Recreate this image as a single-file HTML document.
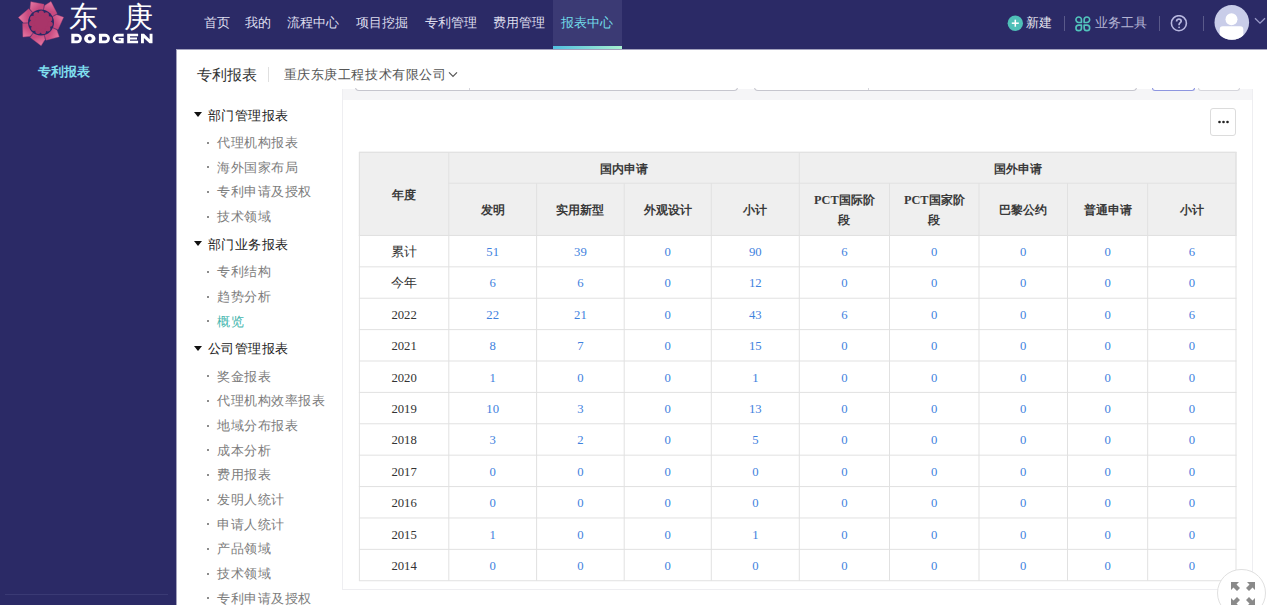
<!DOCTYPE html><html><head><meta charset="utf-8"><style>
*{margin:0;padding:0;box-sizing:border-box}
html,body{width:1267px;height:605px;overflow:hidden;background:#fff}
body{position:relative;font-family:"Liberation Serif",serif;color:#333}
.a{position:absolute;white-space:nowrap}
#hdr{position:absolute;left:0;top:0;width:1267px;height:49px;background:#2b2a66}
#side{position:absolute;left:0;top:49px;width:176px;height:556px;background:#2b2a66}
.nav{position:absolute;top:13.2px;height:20px;line-height:20px;font-size:13px;color:#e6e6f0}
.mh{font-size:13px;letter-spacing:0.55px;color:#222;height:20px;line-height:20px}
.mi{font-size:13px;letter-spacing:0.55px;color:#7c7c7c;height:20px;line-height:20px}
.dot{position:absolute;width:2px;height:2px;background:#666;border-radius:1px}
.tri{position:absolute;width:0;height:0;border-left:4.5px solid transparent;border-right:4.5px solid transparent;border-top:5px solid #111}
.hl{position:absolute;height:1px;background:#e2e2e2}
.vl{position:absolute;width:1px;background:#e2e2e2}
.th{position:absolute;font-size:12.3px;font-weight:bold;color:#3a3a3a;text-align:center;line-height:20px}
.td{position:absolute;font-size:12.7px;color:#3f82de;text-align:center;line-height:20px}
.ty{color:#333}
</style></head><body>

<div id="hdr"></div><div id="side"></div>
<svg class="a" style="left:0;top:0" width="70" height="49" viewBox="0 0 70 49"><defs><linearGradient id="pg" x1="0" y1="0" x2="1" y2="1"><stop offset="0" stop-color="#e6709c"/><stop offset="1" stop-color="#cc4d82"/></linearGradient></defs><linearGradient id="pg0" gradientUnits="userSpaceOnUse" x1="30.70" y1="1.38" x2="37.61" y2="8.92"><stop offset="0" stop-color="#e77ba5"/><stop offset="1" stop-color="#c84a7f"/></linearGradient><polygon points="33.45,13.17 29.99,8.90 30.83,1.65 44.04,4.35 42.98,10.66" fill="url(#pg0)" stroke="#b8457a" stroke-width="0.4"/><linearGradient id="pg1" gradientUnits="userSpaceOnUse" x1="51.09" y1="1.28" x2="49.51" y2="11.38"><stop offset="0" stop-color="#e77ba5"/><stop offset="1" stop-color="#c84a7f"/></linearGradient><polygon points="43.58,10.78 44.77,5.41 50.96,1.55 57.08,13.56 51.49,16.67" fill="url(#pg1)" stroke="#b8457a" stroke-width="0.4"/><linearGradient id="pg2" gradientUnits="userSpaceOnUse" x1="63.88" y1="17.16" x2="55.00" y2="22.22"><stop offset="0" stop-color="#e77ba5"/><stop offset="1" stop-color="#c84a7f"/></linearGradient><polygon points="51.77,17.21 56.71,14.79 63.59,17.22 58.02,29.50 52.10,27.06" fill="url(#pg2)" stroke="#b8457a" stroke-width="0.4"/><linearGradient id="pg3" gradientUnits="userSpaceOnUse" x1="59.45" y1="37.06" x2="49.95" y2="33.27"><stop offset="0" stop-color="#e77ba5"/><stop offset="1" stop-color="#c84a7f"/></linearGradient><polygon points="51.85,27.63 56.82,29.97 59.21,36.87 46.14,40.17 44.35,34.02" fill="url(#pg3)" stroke="#b8457a" stroke-width="0.4"/><linearGradient id="pg4" gradientUnits="userSpaceOnUse" x1="41.12" y1="46.00" x2="38.16" y2="36.21"><stop offset="0" stop-color="#e77ba5"/><stop offset="1" stop-color="#c84a7f"/></linearGradient><polygon points="43.76,34.18 45.02,39.53 41.12,45.70 30.39,37.53 34.08,32.30" fill="url(#pg4)" stroke="#b8457a" stroke-width="0.4"/><linearGradient id="pg5" gradientUnits="userSpaceOnUse" x1="22.70" y1="37.24" x2="28.51" y2="28.82"><stop offset="0" stop-color="#e77ba5"/><stop offset="1" stop-color="#c84a7f"/></linearGradient><polygon points="33.59,31.94 30.19,36.26 22.93,37.06 22.63,23.58 29.02,23.20" fill="url(#pg5)" stroke="#b8457a" stroke-width="0.4"/><linearGradient id="pg6" gradientUnits="userSpaceOnUse" x1="18.06" y1="17.39" x2="28.27" y2="16.68"><stop offset="0" stop-color="#e77ba5"/><stop offset="1" stop-color="#c84a7f"/></linearGradient><polygon points="29.00,22.59 23.50,22.63 18.36,17.45 28.71,8.81 32.98,13.57" fill="url(#pg6)" stroke="#b8457a" stroke-width="0.4"/><circle cx="41" cy="22.5" r="13" fill="#2b2a66"/><circle cx="41" cy="22.5" r="10" fill="#a93569"/><circle cx="50.06" cy="24.10" r="2.7" fill="#a93569"/><circle cx="47.76" cy="28.74" r="2.7" fill="#a93569"/><circle cx="43.31" cy="31.41" r="2.7" fill="#a93569"/><circle cx="38.13" cy="31.24" r="2.7" fill="#a93569"/><circle cx="33.86" cy="28.30" r="2.7" fill="#a93569"/><circle cx="31.86" cy="23.52" r="2.7" fill="#a93569"/><circle cx="32.76" cy="18.41" r="2.7" fill="#a93569"/><circle cx="36.27" cy="14.61" r="2.7" fill="#a93569"/><circle cx="41.29" cy="13.30" r="2.7" fill="#a93569"/><circle cx="46.22" cy="14.92" r="2.7" fill="#a93569"/><circle cx="49.49" cy="18.95" r="2.7" fill="#a93569"/></svg>
<div class="a" style="left:69px;top:-1px;font-family:'Liberation Sans',sans-serif;font-size:29px;color:#fff;line-height:36px;letter-spacing:0">东</div>
<div class="a" style="left:123.5px;top:-1px;font-family:'Liberation Sans',sans-serif;font-size:29px;color:#fff;line-height:36px">庚</div>
<svg class="a" style="left:0;top:0" width="160" height="49" viewBox="0 0 160 49"><path fill="#fff" fill-rule="evenodd" d="M71.30 33.80 H77.15 A4.75 4.75 0 0 1 77.15 43.30 H71.30 Z M74.50 36.65 H77.15 A1.90 1.90 0 0 1 77.15 40.45 H74.50 Z M89.8 33.8 A5.7 4.75 0 1 1 89.79 33.8 Z M89.8 36.55 A1.95 2.0 0 1 0 89.81 36.55 Z M98.90 33.80 H105.15 A4.75 4.75 0 0 1 105.15 43.30 H98.90 Z M102.10 36.65 H105.15 A1.90 1.90 0 0 1 105.15 40.45 H102.10 Z M123.7 33.8 H117.5 A4.75 4.75 0 0 0 117.5 43.3 H123.7 V38.0 H118.6 V39.5 H120.9 V40.6 H117.5 A2.05 2.05 0 0 1 117.5 36.5 H123.7 Z M127.2 33.8 H138.1 V36.3 H130.0 V37.55 H137.0 V39.55 H130.0 V40.8 H138.1 V43.3 H127.2 Z M141.0 43.3 V33.8 H144.0 L149.6 39.2 V33.8 H152.5 V43.3 H149.5 L143.9 37.9 V43.3 Z"/></svg>
<div class="a" style="left:553px;top:0;width:69px;height:49px;background:#3b3a74"></div>
<div class="a" style="left:553px;top:46px;width:69px;height:3px;background:linear-gradient(90deg,#52c0e0,#a8f0d0)"></div>
<div class="nav" style="left:204px;color:#dedeee">首页</div>
<div class="nav" style="left:245.4px;color:#dedeee">我的</div>
<div class="nav" style="left:287px;color:#dedeee">流程中心</div>
<div class="nav" style="left:355.5px;color:#dedeee">项目挖掘</div>
<div class="nav" style="left:425px;color:#dedeee">专利管理</div>
<div class="nav" style="left:493px;color:#dedeee">费用管理</div>
<div class="nav" style="left:561.4px;color:#72dbe9">报表中心</div>
<svg class="a" style="left:1007px;top:15px" width="17" height="17" viewBox="0 0 17 17"><circle cx="8.3" cy="8.2" r="7.7" fill="#4fc0b8"/><rect x="4.8" y="7.45" width="7" height="1.5" fill="#fff"/><rect x="7.55" y="4.7" width="1.5" height="7" fill="#fff"/></svg>
<div class="nav" style="left:1026px;color:#e6e6f0">新建</div>
<div class="a" style="left:1064px;top:16px;width:1px;height:15px;background:#5a5a8a"></div>
<svg class="a" style="left:1075px;top:15.8px" width="17" height="17" viewBox="0 0 17 17"><path d="M6.45 3.70 L6.45 6.45 L3.70 6.45 A2.75 2.75 0 1 1 6.45 3.70 Z M9.15 3.70 L9.15 6.45 L11.90 6.45 A2.75 2.75 0 1 0 9.15 3.70 Z M6.45 11.90 L6.45 9.15 L3.70 9.15 A2.75 2.75 0 1 0 6.45 11.90 Z M9.15 11.90 L9.15 9.15 L11.90 9.15 A2.75 2.75 0 1 1 9.15 11.90 Z" fill="none" stroke="#52c4bc" stroke-width="1.65" stroke-linejoin="round"/></svg>
<div class="nav" style="left:1095px;color:#b4b4d4">业务工具</div>
<div class="a" style="left:1159px;top:16px;width:1px;height:15px;background:#5a5a8a"></div>
<svg class="a" style="left:1170px;top:15px" width="18" height="17" viewBox="0 0 18 17"><circle cx="8.9" cy="8.2" r="7.5" fill="none" stroke="#b8b8e0" stroke-width="1.6"/><path d="M6.6 6.4 C6.6 4.9 7.6 4.1 8.9 4.1 C10.3 4.1 11.2 5 11.2 6.2 C11.2 7.6 9.1 7.8 9.1 9.6 L9.1 10.2" fill="none" stroke="#b8b8e0" stroke-width="1.7"/><circle cx="9.1" cy="12.3" r="0.9" fill="#b8b8e0"/></svg>
<div class="a" style="left:1203px;top:16px;width:1px;height:15px;background:#5a5a8a"></div>
<svg class="a" style="left:1214px;top:5px" width="36" height="36" viewBox="0 0 36 36"><defs><clipPath id="av"><circle cx="17.8" cy="17.4" r="17.3"/></clipPath></defs><circle cx="17.8" cy="17.4" r="17.3" fill="#c9cde9"/><g clip-path="url(#av)"><circle cx="17.5" cy="14.2" r="6" fill="#fff"/><rect x="5.7" y="21.3" width="23.6" height="20" rx="3" fill="#fff"/></g></svg>
<svg class="a" style="left:1254px;top:17px" width="13" height="8" viewBox="0 0 13 8"><path d="M1 1.2 L6 6.2 L11 1.2" fill="none" stroke="#9a9ac8" stroke-width="1.3"/></svg>
<div class="a" style="left:5px;top:594px;width:163px;height:1px;background:#3a3a74"></div>
<div class="a" style="left:37.5px;top:62px;font-size:13.2px;line-height:20px;color:#7fdfee;font-weight:bold">专利报表</div>
<div class="a" style="left:342px;top:89px;width:911px;height:11px;background:#f5f5f7;border-left:1px solid #eeeef1;border-right:1px solid #eeeef1"></div>
<div class="a" style="left:355px;top:80px;width:383px;height:11px;border:1px solid #c6c6ce;border-top:none;border-radius:0 0 4px 4px;background:#fff"></div>
<div class="a" style="left:469px;top:80px;width:1px;height:10px;background:#d6d6dc"></div>
<div class="a" style="left:754px;top:80px;width:383px;height:11px;border:1px solid #c6c6ce;border-top:none;border-radius:0 0 4px 4px;background:#fff"></div>
<div class="a" style="left:868px;top:80px;width:1px;height:10px;background:#d6d6dc"></div>
<div class="a" style="left:1152px;top:80px;width:43px;height:11px;border:1px solid #8e96e0;border-top:none;border-radius:0 0 3px 3px;background:#fff"></div>
<div class="a" style="left:1198px;top:80px;width:42px;height:11px;border:1px solid #d6d6dc;border-top:none;border-radius:0 0 3px 3px;background:#fff"></div>
<div class="a" style="left:342px;top:100px;width:911px;height:490px;border:1px solid #eeeef1;border-top:none;background:#fff"></div>
<div class="a" style="left:1210px;top:108px;width:26px;height:28px;border:1px solid #dcdcdc;border-radius:3px;background:#fff"></div>
<svg class="a" style="left:1216.5px;top:120px" width="14" height="4" viewBox="0 0 14 4"><circle cx="2.5" cy="2" r="1.3" fill="#222"/><circle cx="6.5" cy="2" r="1.3" fill="#222"/><circle cx="10.5" cy="2" r="1.3" fill="#222"/></svg>
<div class="a" style="left:176px;top:49px;width:1091px;height:39px;background:#fff;z-index:0"></div>
<div class="a" style="left:196.5px;top:65px;font-size:15px;line-height:20px;color:#333">专利报表</div>
<div class="a" style="left:268px;top:67px;width:1px;height:15px;background:#e0e0e0"></div>
<div class="a" style="left:283.5px;top:65px;font-size:13px;letter-spacing:0.6px;line-height:20px;color:#555">重庆东庚工程技术有限公司</div>
<svg class="a" style="left:448px;top:71px" width="10" height="7" viewBox="0 0 10 7"><path d="M1 1.3 L5 5.3 L9 1.3" fill="none" stroke="#555" stroke-width="1.2"/></svg>
<div class="a" style="left:176px;top:49px;width:1091px;height:1px;background:#a3a2bd"></div>
<div class="a" style="left:176px;top:49px;width:1px;height:556px;background:#a3a2bd"></div>
<div class="tri" style="left:193.5px;top:112.0px"></div>
<div class="a mh" style="left:207.5px;top:105.5px">部门管理报表</div>
<div class="dot" style="left:207px;top:141.6px"></div>
<div class="a mi" style="left:217px;top:133.0px;color:#7c7c7c">代理机构报表</div>
<div class="dot" style="left:207px;top:166.3px"></div>
<div class="a mi" style="left:217px;top:157.7px;color:#7c7c7c">海外国家布局</div>
<div class="dot" style="left:207px;top:191.0px"></div>
<div class="a mi" style="left:217px;top:182.4px;color:#7c7c7c">专利申请及授权</div>
<div class="dot" style="left:207px;top:215.6px"></div>
<div class="a mi" style="left:217px;top:207.0px;color:#7c7c7c">技术领域</div>
<div class="tri" style="left:193.5px;top:241.2px"></div>
<div class="a mh" style="left:207.5px;top:234.6px">部门业务报表</div>
<div class="dot" style="left:207px;top:270.8px"></div>
<div class="a mi" style="left:217px;top:262.2px;color:#7c7c7c">专利结构</div>
<div class="dot" style="left:207px;top:295.5px"></div>
<div class="a mi" style="left:217px;top:286.9px;color:#7c7c7c">趋势分析</div>
<div class="dot" style="left:207px;top:320.2px"></div>
<div class="a mi" style="left:217px;top:311.6px;color:#45b6ae">概览</div>
<div class="tri" style="left:193.5px;top:345.7px"></div>
<div class="a mh" style="left:207.5px;top:339.1px">公司管理报表</div>
<div class="dot" style="left:207px;top:375.3px"></div>
<div class="a mi" style="left:217px;top:366.7px;color:#7c7c7c">奖金报表</div>
<div class="dot" style="left:207px;top:400.0px"></div>
<div class="a mi" style="left:217px;top:391.4px;color:#7c7c7c">代理机构效率报表</div>
<div class="dot" style="left:207px;top:424.7px"></div>
<div class="a mi" style="left:217px;top:416.1px;color:#7c7c7c">地域分布报表</div>
<div class="dot" style="left:207px;top:449.3px"></div>
<div class="a mi" style="left:217px;top:440.7px;color:#7c7c7c">成本分析</div>
<div class="dot" style="left:207px;top:474.0px"></div>
<div class="a mi" style="left:217px;top:465.4px;color:#7c7c7c">费用报表</div>
<div class="dot" style="left:207px;top:498.7px"></div>
<div class="a mi" style="left:217px;top:490.1px;color:#7c7c7c">发明人统计</div>
<div class="dot" style="left:207px;top:523.3px"></div>
<div class="a mi" style="left:217px;top:514.7px;color:#7c7c7c">申请人统计</div>
<div class="dot" style="left:207px;top:548.0px"></div>
<div class="a mi" style="left:217px;top:539.4px;color:#7c7c7c">产品领域</div>
<div class="dot" style="left:207px;top:572.7px"></div>
<div class="a mi" style="left:217px;top:564.1px;color:#7c7c7c">技术领域</div>
<div class="dot" style="left:207px;top:597.4px"></div>
<div class="a mi" style="left:217px;top:588.8px;color:#7c7c7c">专利申请及授权</div>
<svg class="a" style="left:350px;top:145px" width="900" height="445" viewBox="0 0 900 445"><g stroke="#e1e1e1" stroke-width="1"><rect x="9.40" y="7.30" width="876.60" height="83.15" fill="#efefef"/><line x1="8.90" y1="7.30" x2="886.50" y2="7.30"/><line x1="98.30" y1="38.20" x2="886.50" y2="38.20"/><line x1="8.90" y1="90.45" x2="886.50" y2="90.45"/><line x1="8.90" y1="121.84" x2="886.50" y2="121.84"/><line x1="8.90" y1="153.23" x2="886.50" y2="153.23"/><line x1="8.90" y1="184.62" x2="886.50" y2="184.62"/><line x1="8.90" y1="216.01" x2="886.50" y2="216.01"/><line x1="8.90" y1="247.40" x2="886.50" y2="247.40"/><line x1="8.90" y1="278.79" x2="886.50" y2="278.79"/><line x1="8.90" y1="310.18" x2="886.50" y2="310.18"/><line x1="8.90" y1="341.57" x2="886.50" y2="341.57"/><line x1="8.90" y1="372.96" x2="886.50" y2="372.96"/><line x1="8.90" y1="404.35" x2="886.50" y2="404.35"/><line x1="8.90" y1="435.74" x2="886.50" y2="435.74"/><line x1="9.40" y1="7.30" x2="9.40" y2="435.74"/><line x1="98.80" y1="7.30" x2="98.80" y2="435.74"/><line x1="186.60" y1="38.20" x2="186.60" y2="435.74"/><line x1="274.20" y1="38.20" x2="274.20" y2="435.74"/><line x1="361.30" y1="38.20" x2="361.30" y2="435.74"/><line x1="449.30" y1="7.30" x2="449.30" y2="435.74"/><line x1="539.50" y1="38.20" x2="539.50" y2="435.74"/><line x1="629.00" y1="38.20" x2="629.00" y2="435.74"/><line x1="717.50" y1="38.20" x2="717.50" y2="435.74"/><line x1="797.70" y1="38.20" x2="797.70" y2="435.74"/><line x1="886.00" y1="7.30" x2="886.00" y2="435.74"/></g></svg>
<div class="th" style="left:359.40px;width:89.40px;top:184.78px;">年度</div>
<div class="th" style="left:448.80px;width:350.50px;top:158.65px;">国内申请</div>
<div class="th" style="left:799.30px;width:436.70px;top:158.65px;">国外申请</div>
<div class="th" style="left:448.80px;width:87.80px;top:200.22px;">发明</div>
<div class="th" style="left:536.60px;width:87.60px;top:200.22px;">实用新型</div>
<div class="th" style="left:624.20px;width:87.10px;top:200.22px;">外观设计</div>
<div class="th" style="left:711.30px;width:88.00px;top:200.22px;">小计</div>
<div class="th" style="left:799.30px;width:90.20px;top:190.22px;line-height:20px"><b>PCT</b>国际阶<br>段</div>
<div class="th" style="left:889.50px;width:89.50px;top:190.22px;line-height:20px"><b>PCT</b>国家阶<br>段</div>
<div class="th" style="left:979.00px;width:88.50px;top:200.22px;">巴黎公约</div>
<div class="th" style="left:1067.50px;width:80.20px;top:200.22px;">普通申请</div>
<div class="th" style="left:1147.70px;width:88.30px;top:200.22px;">小计</div>
<div class="td ty" style="left:359.40px;width:89.40px;top:242.04px;">累计</div>
<div class="td" style="left:448.80px;width:87.80px;top:242.04px;">51</div>
<div class="td" style="left:536.60px;width:87.60px;top:242.04px;">39</div>
<div class="td" style="left:624.20px;width:87.10px;top:242.04px;">0</div>
<div class="td" style="left:711.30px;width:88.00px;top:242.04px;">90</div>
<div class="td" style="left:799.30px;width:90.20px;top:242.04px;">6</div>
<div class="td" style="left:889.50px;width:89.50px;top:242.04px;">0</div>
<div class="td" style="left:979.00px;width:88.50px;top:242.04px;">0</div>
<div class="td" style="left:1067.50px;width:80.20px;top:242.04px;">0</div>
<div class="td" style="left:1147.70px;width:88.30px;top:242.04px;">6</div>
<div class="td ty" style="left:359.40px;width:89.40px;top:273.43px;">今年</div>
<div class="td" style="left:448.80px;width:87.80px;top:273.43px;">6</div>
<div class="td" style="left:536.60px;width:87.60px;top:273.43px;">6</div>
<div class="td" style="left:624.20px;width:87.10px;top:273.43px;">0</div>
<div class="td" style="left:711.30px;width:88.00px;top:273.43px;">12</div>
<div class="td" style="left:799.30px;width:90.20px;top:273.43px;">0</div>
<div class="td" style="left:889.50px;width:89.50px;top:273.43px;">0</div>
<div class="td" style="left:979.00px;width:88.50px;top:273.43px;">0</div>
<div class="td" style="left:1067.50px;width:80.20px;top:273.43px;">0</div>
<div class="td" style="left:1147.70px;width:88.30px;top:273.43px;">0</div>
<div class="td ty" style="left:359.40px;width:89.40px;top:304.82px;">2022</div>
<div class="td" style="left:448.80px;width:87.80px;top:304.82px;">22</div>
<div class="td" style="left:536.60px;width:87.60px;top:304.82px;">21</div>
<div class="td" style="left:624.20px;width:87.10px;top:304.82px;">0</div>
<div class="td" style="left:711.30px;width:88.00px;top:304.82px;">43</div>
<div class="td" style="left:799.30px;width:90.20px;top:304.82px;">6</div>
<div class="td" style="left:889.50px;width:89.50px;top:304.82px;">0</div>
<div class="td" style="left:979.00px;width:88.50px;top:304.82px;">0</div>
<div class="td" style="left:1067.50px;width:80.20px;top:304.82px;">0</div>
<div class="td" style="left:1147.70px;width:88.30px;top:304.82px;">6</div>
<div class="td ty" style="left:359.40px;width:89.40px;top:336.21px;">2021</div>
<div class="td" style="left:448.80px;width:87.80px;top:336.21px;">8</div>
<div class="td" style="left:536.60px;width:87.60px;top:336.21px;">7</div>
<div class="td" style="left:624.20px;width:87.10px;top:336.21px;">0</div>
<div class="td" style="left:711.30px;width:88.00px;top:336.21px;">15</div>
<div class="td" style="left:799.30px;width:90.20px;top:336.21px;">0</div>
<div class="td" style="left:889.50px;width:89.50px;top:336.21px;">0</div>
<div class="td" style="left:979.00px;width:88.50px;top:336.21px;">0</div>
<div class="td" style="left:1067.50px;width:80.20px;top:336.21px;">0</div>
<div class="td" style="left:1147.70px;width:88.30px;top:336.21px;">0</div>
<div class="td ty" style="left:359.40px;width:89.40px;top:367.60px;">2020</div>
<div class="td" style="left:448.80px;width:87.80px;top:367.60px;">1</div>
<div class="td" style="left:536.60px;width:87.60px;top:367.60px;">0</div>
<div class="td" style="left:624.20px;width:87.10px;top:367.60px;">0</div>
<div class="td" style="left:711.30px;width:88.00px;top:367.60px;">1</div>
<div class="td" style="left:799.30px;width:90.20px;top:367.60px;">0</div>
<div class="td" style="left:889.50px;width:89.50px;top:367.60px;">0</div>
<div class="td" style="left:979.00px;width:88.50px;top:367.60px;">0</div>
<div class="td" style="left:1067.50px;width:80.20px;top:367.60px;">0</div>
<div class="td" style="left:1147.70px;width:88.30px;top:367.60px;">0</div>
<div class="td ty" style="left:359.40px;width:89.40px;top:398.99px;">2019</div>
<div class="td" style="left:448.80px;width:87.80px;top:398.99px;">10</div>
<div class="td" style="left:536.60px;width:87.60px;top:398.99px;">3</div>
<div class="td" style="left:624.20px;width:87.10px;top:398.99px;">0</div>
<div class="td" style="left:711.30px;width:88.00px;top:398.99px;">13</div>
<div class="td" style="left:799.30px;width:90.20px;top:398.99px;">0</div>
<div class="td" style="left:889.50px;width:89.50px;top:398.99px;">0</div>
<div class="td" style="left:979.00px;width:88.50px;top:398.99px;">0</div>
<div class="td" style="left:1067.50px;width:80.20px;top:398.99px;">0</div>
<div class="td" style="left:1147.70px;width:88.30px;top:398.99px;">0</div>
<div class="td ty" style="left:359.40px;width:89.40px;top:430.38px;">2018</div>
<div class="td" style="left:448.80px;width:87.80px;top:430.38px;">3</div>
<div class="td" style="left:536.60px;width:87.60px;top:430.38px;">2</div>
<div class="td" style="left:624.20px;width:87.10px;top:430.38px;">0</div>
<div class="td" style="left:711.30px;width:88.00px;top:430.38px;">5</div>
<div class="td" style="left:799.30px;width:90.20px;top:430.38px;">0</div>
<div class="td" style="left:889.50px;width:89.50px;top:430.38px;">0</div>
<div class="td" style="left:979.00px;width:88.50px;top:430.38px;">0</div>
<div class="td" style="left:1067.50px;width:80.20px;top:430.38px;">0</div>
<div class="td" style="left:1147.70px;width:88.30px;top:430.38px;">0</div>
<div class="td ty" style="left:359.40px;width:89.40px;top:461.77px;">2017</div>
<div class="td" style="left:448.80px;width:87.80px;top:461.77px;">0</div>
<div class="td" style="left:536.60px;width:87.60px;top:461.77px;">0</div>
<div class="td" style="left:624.20px;width:87.10px;top:461.77px;">0</div>
<div class="td" style="left:711.30px;width:88.00px;top:461.77px;">0</div>
<div class="td" style="left:799.30px;width:90.20px;top:461.77px;">0</div>
<div class="td" style="left:889.50px;width:89.50px;top:461.77px;">0</div>
<div class="td" style="left:979.00px;width:88.50px;top:461.77px;">0</div>
<div class="td" style="left:1067.50px;width:80.20px;top:461.77px;">0</div>
<div class="td" style="left:1147.70px;width:88.30px;top:461.77px;">0</div>
<div class="td ty" style="left:359.40px;width:89.40px;top:493.16px;">2016</div>
<div class="td" style="left:448.80px;width:87.80px;top:493.16px;">0</div>
<div class="td" style="left:536.60px;width:87.60px;top:493.16px;">0</div>
<div class="td" style="left:624.20px;width:87.10px;top:493.16px;">0</div>
<div class="td" style="left:711.30px;width:88.00px;top:493.16px;">0</div>
<div class="td" style="left:799.30px;width:90.20px;top:493.16px;">0</div>
<div class="td" style="left:889.50px;width:89.50px;top:493.16px;">0</div>
<div class="td" style="left:979.00px;width:88.50px;top:493.16px;">0</div>
<div class="td" style="left:1067.50px;width:80.20px;top:493.16px;">0</div>
<div class="td" style="left:1147.70px;width:88.30px;top:493.16px;">0</div>
<div class="td ty" style="left:359.40px;width:89.40px;top:524.55px;">2015</div>
<div class="td" style="left:448.80px;width:87.80px;top:524.55px;">1</div>
<div class="td" style="left:536.60px;width:87.60px;top:524.55px;">0</div>
<div class="td" style="left:624.20px;width:87.10px;top:524.55px;">0</div>
<div class="td" style="left:711.30px;width:88.00px;top:524.55px;">1</div>
<div class="td" style="left:799.30px;width:90.20px;top:524.55px;">0</div>
<div class="td" style="left:889.50px;width:89.50px;top:524.55px;">0</div>
<div class="td" style="left:979.00px;width:88.50px;top:524.55px;">0</div>
<div class="td" style="left:1067.50px;width:80.20px;top:524.55px;">0</div>
<div class="td" style="left:1147.70px;width:88.30px;top:524.55px;">0</div>
<div class="td ty" style="left:359.40px;width:89.40px;top:555.94px;">2014</div>
<div class="td" style="left:448.80px;width:87.80px;top:555.94px;">0</div>
<div class="td" style="left:536.60px;width:87.60px;top:555.94px;">0</div>
<div class="td" style="left:624.20px;width:87.10px;top:555.94px;">0</div>
<div class="td" style="left:711.30px;width:88.00px;top:555.94px;">0</div>
<div class="td" style="left:799.30px;width:90.20px;top:555.94px;">0</div>
<div class="td" style="left:889.50px;width:89.50px;top:555.94px;">0</div>
<div class="td" style="left:979.00px;width:88.50px;top:555.94px;">0</div>
<div class="td" style="left:1067.50px;width:80.20px;top:555.94px;">0</div>
<div class="td" style="left:1147.70px;width:88.30px;top:555.94px;">0</div>
<div class="a" style="left:1217px;top:568.5px;width:48.5px;height:48.5px;border:1px solid #e0e0e0;border-radius:50%;background:#fff"></div>
<svg class="a" style="left:1229.5px;top:580.5px" width="26" height="26" viewBox="0 0 26 26" fill="#8a8a8a"><path d="M1 1 H9 L6.5 3.5 L10 7 L7 10 L3.5 6.5 L1 9 Z"/><path d="M25 1 H17 L19.5 3.5 L16 7 L19 10 L22.5 6.5 L25 9 Z"/><path d="M1 25 H9 L6.5 22.5 L10 19 L7 16 L3.5 19.5 L1 17 Z"/><path d="M25 25 H17 L19.5 22.5 L16 19 L19 16 L22.5 19.5 L25 17 Z"/></svg>
</body></html>
